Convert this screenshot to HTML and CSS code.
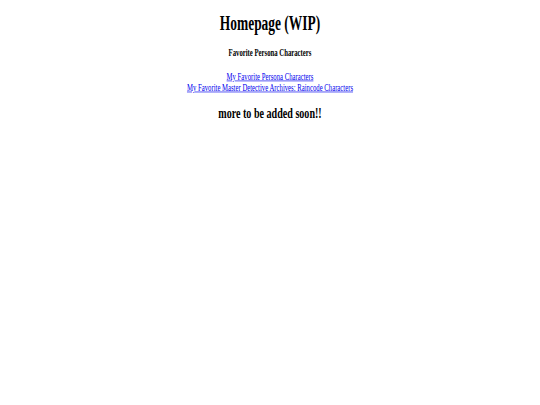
FILE: index.html
```html
<!DOCTYPE html>
<html lang="en">
<head>
<meta charset="utf-8">
<title>Homepage (WIP)</title>
<link rel="stylesheet" href="styles.css">
</head>
<body>
<div class="page">
  <h1 class="title">Homepage (WIP)</h1>
  <h4 class="subtitle">Favorite Persona Characters</h4>
  <div class="links">
    <a href="#">My Favorite Persona Characters</a><br>
    <a href="#">My Favorite Master Detective Archives: Raincode Characters</a>
  </div>
  <h2 class="soon">more to be added soon!!</h2>
</div>
</body>
</html>
```
FILE: styles.css
```css
html, body {
  margin: 0;
  padding: 0;
  background: #ffffff;
}

.page {
  width: 540px;
  padding-top: 16.5px;
  display: flex;
  flex-direction: column;
  align-items: center;
  text-align: center;
  font-family: "Liberation Serif", "Times New Roman", serif;
  color: #000000;
  transform: scale(0.42, 0.65);
  transform-origin: 50% 0;
}

.title {
  margin: 0;
  font-size: 32px;
  line-height: 1.15;
  font-weight: bold;
  white-space: nowrap;
}

.subtitle {
  margin: 18.7px 0 0;
  font-size: 16px;
  line-height: 1.15;
  font-weight: bold;
  white-space: nowrap;
}

.links {
  margin-top: 18.6px;
  font-size: 16px;
  line-height: 17px;
  white-space: nowrap;
}

.links a {
  color: #0000ee;
  text-decoration: underline;
}

.soon {
  margin: 18.5px 0 0;
  font-size: 24px;
  line-height: 1.15;
  font-weight: bold;
  white-space: nowrap;
}
```
